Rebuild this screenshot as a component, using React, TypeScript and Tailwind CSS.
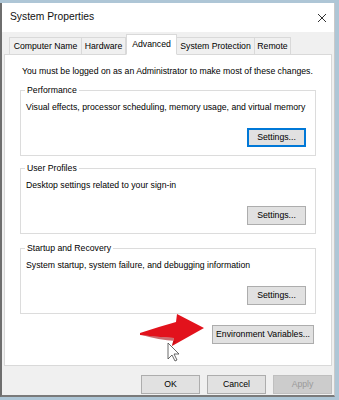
import React from "react";

const font = { fontFamily: '"Liberation Sans", Arial, sans-serif' };

function Btn({ children, w, primary, disabled }: { children: React.ReactNode; w: string; primary?: boolean; disabled?: boolean }) {
  const base = "h-[19px] flex items-center justify-center text-[8.7px] leading-none border whitespace-nowrap";
  const cls = disabled
    ? "bg-[#cccccc] border-[#bfbfbf] text-[#9a9a9a]"
    : primary
    ? "bg-[#e1e1e1] border-[#0078d7] border-2 text-black"
    : "bg-[#e1e1e1] border-[#adadad] text-black";
  return <div className={`${base} ${cls} ${w}`}>{children}</div>;
}

function Group({ label, text, mt }: { label: string; text: string; mt: string }) {
  return (
    <div className={`relative ml-[15px] w-[296px] h-[66px] border border-[#dcdcdc] flex flex-col pl-[5px] pr-[9px] pt-[10px] pb-[8px] ${mt}`}>
      <div className="absolute -top-[7px] left-[4px] bg-white px-[2px] text-[8.7px] leading-[12px] text-black whitespace-nowrap">{label}</div>
      <div className="text-[8.7px] leading-[12px] text-black whitespace-nowrap">{text}</div>
      <div className="mt-auto flex justify-end">
        <Btn w="w-[59px]" primary={label === "Performance"}>Settings...</Btn>
      </div>
    </div>
  );
}

export default function App() {
  const tabs = [
    { t: "Computer Name", w: "w-[73px]" },
    { t: "Hardware", w: "w-[45px]" },
    { t: "Advanced", w: "w-[51px]", sel: true },
    { t: "System Protection", w: "w-[79px]" },
    { t: "Remote", w: "w-[37px]" },
  ];
  return (
    <div className="relative w-[339px] h-[400px] bg-[#aec6d6] pt-[3px] overflow-hidden" style={font}>
      <div className="w-[335px] h-[394px] bg-[#f0f0f0] border-l-2 border-l-[#6e6e6e] border-r border-r-[#c9c9c9] border-b-2 border-b-[#7a7a7a] flex flex-col">
        <div className="h-[29px] bg-white flex items-center justify-between pl-[8px] pr-[5px]">
          <span className="text-[10.3px] text-[#111] leading-none">System Properties</span>
          <svg width="10" height="10" viewBox="0 0 10 10" className="mr-[2px]">
            <path d="M1 1 L9 9 M9 1 L1 9" stroke="#333" strokeWidth="1" />
          </svg>
        </div>
        <div className="h-[21px] flex items-end pl-[7px] mt-[1px]">
          {tabs.map((tb) => (
            <div
              key={tb.t}
              className={`${tb.w} flex items-center justify-center text-[8.7px] leading-none text-black border border-[#d9d9d9] whitespace-nowrap ${
                tb.sel ? "h-[21px] bg-white border-b-white relative z-10 -mb-px" : "h-[17px] bg-[#f0f0f0] border-b-0"
              } ${tb.sel ? "" : "-ml-px first:ml-0"}`}
            >
              {tb.t}
            </div>
          ))}
        </div>
        <div className="ml-[2px] w-[328px] h-[312px] bg-white border border-[#d9d9d9] flex flex-col">
          <div className="pl-[17px] pt-[10px] text-[8.7px] leading-[12px] text-black whitespace-nowrap">
            You must be logged on as an Administrator to make most of these changes.
          </div>
          <Group mt="mt-[13px]" label="Performance" text="Visual effects, processor scheduling, memory usage, and virtual memory" />
          <Group mt="mt-[12px]" label="User Profiles" text="Desktop settings related to your sign-in" />
          <Group mt="mt-[14px]" label="Startup and Recovery" text="System startup, system failure, and debugging information" />
          <div className="mt-[11px] flex justify-end pr-[17px]">
            <Btn w="w-[102px]">Environment Variables...</Btn>
          </div>
        </div>
        <div className="mt-[9px] flex justify-end gap-[7px] pr-[2px]">
          <Btn w="w-[59px]">OK</Btn>
          <Btn w="w-[59px]">Cancel</Btn>
          <Btn w="w-[59px]" disabled>Apply</Btn>
        </div>
      </div>
      <svg className="absolute inset-0 pointer-events-none" width="339" height="400" viewBox="0 0 339 400">
        <path d="M140 333 Q158 327 176 322 L177 314 L204 328 L172 346 L174 338 Q157 337 140 335 Z" fill="#e2121c" />
        <path d="M142 335 Q158 337 174 338 L172 346 L176 341 Q158 340 142 335 Z" fill="#a80c12" opacity="0.6" />
        <path d="M168 343 L168 359 L172 355 L175 361 L177 360 L174 354 L179 354 Z" fill="#fff" stroke="#444" strokeWidth="0.8" />
      </svg>
    </div>
  );
}
